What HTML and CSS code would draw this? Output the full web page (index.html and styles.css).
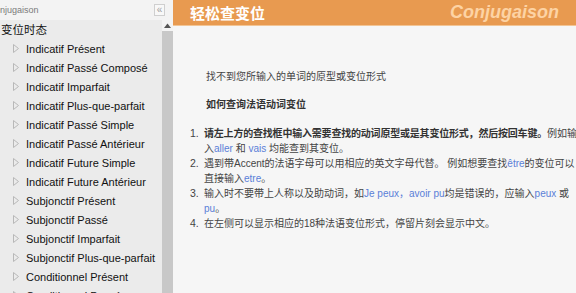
FILE: index.html
```html
<!DOCTYPE html>
<html lang="zh-CN">
<head>
    <meta charset="UTF-8">
    <title>轻松查变位 - Conjugaison</title>
    <link rel="stylesheet" href="styles.css">
</head>
<body>
    <!-- 左侧变位时态 -->
    <aside class="sidebar">
        <div class="side-head">
            <span class="side-title">Conjugaison</span>
            <span class="collapse-btn">&laquo;</span>
        </div>
        <div class="side-body">
            <div class="tree">
                <div class="tree-group">变位时态</div>
                <ul class="tree-list">
                    <li><svg class="arrow" width="6" height="9" viewBox="0 0 6 9"><polygon points="0.5,0.5 5.5,4.5 0.5,8.5" /></svg>Indicatif Présent</li>
                    <li><svg class="arrow" width="6" height="9" viewBox="0 0 6 9"><polygon points="0.5,0.5 5.5,4.5 0.5,8.5" /></svg>Indicatif Passé Composé</li>
                    <li><svg class="arrow" width="6" height="9" viewBox="0 0 6 9"><polygon points="0.5,0.5 5.5,4.5 0.5,8.5" /></svg>Indicatif Imparfait</li>
                    <li><svg class="arrow" width="6" height="9" viewBox="0 0 6 9"><polygon points="0.5,0.5 5.5,4.5 0.5,8.5" /></svg>Indicatif Plus-que-parfait</li>
                    <li><svg class="arrow" width="6" height="9" viewBox="0 0 6 9"><polygon points="0.5,0.5 5.5,4.5 0.5,8.5" /></svg>Indicatif Passé Simple</li>
                    <li><svg class="arrow" width="6" height="9" viewBox="0 0 6 9"><polygon points="0.5,0.5 5.5,4.5 0.5,8.5" /></svg>Indicatif Passé Antérieur</li>
                    <li><svg class="arrow" width="6" height="9" viewBox="0 0 6 9"><polygon points="0.5,0.5 5.5,4.5 0.5,8.5" /></svg>Indicatif Future Simple</li>
                    <li><svg class="arrow" width="6" height="9" viewBox="0 0 6 9"><polygon points="0.5,0.5 5.5,4.5 0.5,8.5" /></svg>Indicatif Future Antérieur</li>
                    <li><svg class="arrow" width="6" height="9" viewBox="0 0 6 9"><polygon points="0.5,0.5 5.5,4.5 0.5,8.5" /></svg>Subjonctif Présent</li>
                    <li><svg class="arrow" width="6" height="9" viewBox="0 0 6 9"><polygon points="0.5,0.5 5.5,4.5 0.5,8.5" /></svg>Subjonctif Passé</li>
                    <li><svg class="arrow" width="6" height="9" viewBox="0 0 6 9"><polygon points="0.5,0.5 5.5,4.5 0.5,8.5" /></svg>Subjonctif Imparfait</li>
                    <li><svg class="arrow" width="6" height="9" viewBox="0 0 6 9"><polygon points="0.5,0.5 5.5,4.5 0.5,8.5" /></svg>Subjonctif Plus-que-parfait</li>
                    <li><svg class="arrow" width="6" height="9" viewBox="0 0 6 9"><polygon points="0.5,0.5 5.5,4.5 0.5,8.5" /></svg>Conditionnel Présent</li>
                    <li><svg class="arrow" width="6" height="9" viewBox="0 0 6 9"><polygon points="0.5,0.5 5.5,4.5 0.5,8.5" /></svg>Conditionnel Passé</li>
                </ul>
            </div>
            <div class="scrollbar">
                <div class="scroll-up"><svg width="7" height="5" viewBox="0 0 7 5"><polygon points="0,5 3.5,0.5 7,5" /></svg></div>
                <div class="scroll-thumb"></div>
            </div>
        </div>
    </aside>

    <!-- 主内容 -->
    <main class="main">
        <header class="topbar">
            <span class="topbar-title">轻松查变位</span>
            <span class="topbar-brand">Conjugaison</span>
        </header>
        <div class="content">
            <p class="notice">找不到您所输入的单词的原型或变位形式</p>
            <p class="howto">如何查询法语动词变位</p>
            <ol class="steps">
                <li><span class="num">1.</span><span class="txt"><b>请左上方的查找框中输入需要查找的动词原型或是其变位形式，然后按回车键。</b>例如输入<span class="word">aller</span> 和 <span class="word">vais</span> 均能查到其变位。</span></li>
                <li><span class="num">2.</span><span class="txt">遇到带Accent的法语字母可以用相应的英文字母代替。 例如想要查找<span class="word">être</span>的变位可以直接输入<span class="word">etre</span>。</span></li>
                <li><span class="num">3.</span><span class="txt">输入时不要带上人称以及助动词，如<span class="word">Je peux，avoir pu</span>均是错误的，应输入<span class="word">peux</span> 或 <span class="word">pu</span>。</span></li>
                <li><span class="num">4.</span><span class="txt">在左侧可以显示相应的18种法语变位形式，停留片刻会显示中文。</span></li>
            </ol>
        </div>
    </main>
</body>
</html>
```

FILE: styles.css
```css
body {
    margin: 0;
    padding: 0;
    display: flex;
    height: 293px;
    overflow: hidden;
    font-family: 'Liberation Sans', Arial, 'Noto Sans CJK SC', sans-serif;
    background: #f6f6f6;
}

/* ===== 左侧 ===== */
.sidebar {
    width: 173px;
    flex-shrink: 0;
    display: flex;
    flex-direction: column;
    background: #ebebeb;
    overflow: hidden;
}

.side-head {
    height: 20px;
    display: flex;
    align-items: center;
    justify-content: space-between;
    background: #f3f3f3;
    padding-right: 8px;
}

.side-title {
    font-size: 9px;
    color: #7a7a7a;
    margin-left: -11.5px;
}

.collapse-btn {
    width: 9px;
    height: 10px;
    border: 1px solid #cfcfcf;
    background: #f8f8f8;
    color: #a0a0a0;
    font-size: 10px;
    line-height: 9px;
    text-align: center;
}

.side-body {
    flex: 1;
    display: flex;
    min-height: 0;
}

.tree {
    flex: 1;
    min-width: 0;
    overflow: hidden;
}

.tree-group {
    height: 19px;
    line-height: 19px;
    font-size: 11.5px;
    color: #111;
    padding-left: 1px;
    font-family: 'Noto Sans CJK SC', sans-serif;
}

.tree-list {
    list-style: none;
    margin: 0;
    padding: 0;
}

.tree-list li {
    height: 19px;
    display: flex;
    align-items: center;
    font-size: 11px;
    color: #111;
    white-space: nowrap;
}

.arrow {
    flex-shrink: 0;
    margin: 0 7px 0 13px;
    fill: none;
    stroke: #b8b8b8;
    stroke-width: 1;
}

.scrollbar {
    width: 11px;
    flex-shrink: 0;
    display: flex;
    flex-direction: column;
    background: #e0e0e0;
}

.scroll-up {
    height: 11px;
    display: flex;
    align-items: center;
    justify-content: center;
    background: #f4f4f4;
}

.scroll-up svg {
    fill: #555;
}

.scroll-thumb {
    flex: 1;
    background: #c8c8c8;
}

/* ===== 主内容 ===== */
.main {
    flex: 1;
    min-width: 0;
    overflow: hidden;
    background: #f6f6f6;
}

.topbar {
    height: 25px;
    display: flex;
    align-items: center;
    justify-content: space-between;
    padding: 0 17px 0 17px;
    background: #e89a50;
    border-bottom: 1px solid #f2c595;
}

.topbar-title {
    font-family: 'Noto Sans CJK SC', sans-serif;
    font-size: 15px;
    font-weight: bold;
    color: #ffffff;
}

.topbar-brand {
    font-size: 18px;
    font-weight: bold;
    font-style: italic;
    color: #fdd3a4;
}

.content {
    padding: 43px 0 0 15px;
    font-size: 10px;
    line-height: 15px;
    color: #444;
}

.content p {
    margin: 0;
    padding-left: 18px;
}

.notice {
    margin-bottom: 13px !important;
}

.howto {
    font-weight: bold;
    color: #333;
    margin-bottom: 14px !important;
}

.steps {
    list-style: none;
    margin: 0;
    padding: 0;
    width: 392px;
}

.steps li {
    display: flex;
}

.num {
    width: 14px;
    flex-shrink: 0;
    padding-left: 2px;
    font-size: 10.5px;
}

.txt b {
    color: #333;
    letter-spacing: -0.2px;
}

.word {
    color: #5b80d8;
}
```
